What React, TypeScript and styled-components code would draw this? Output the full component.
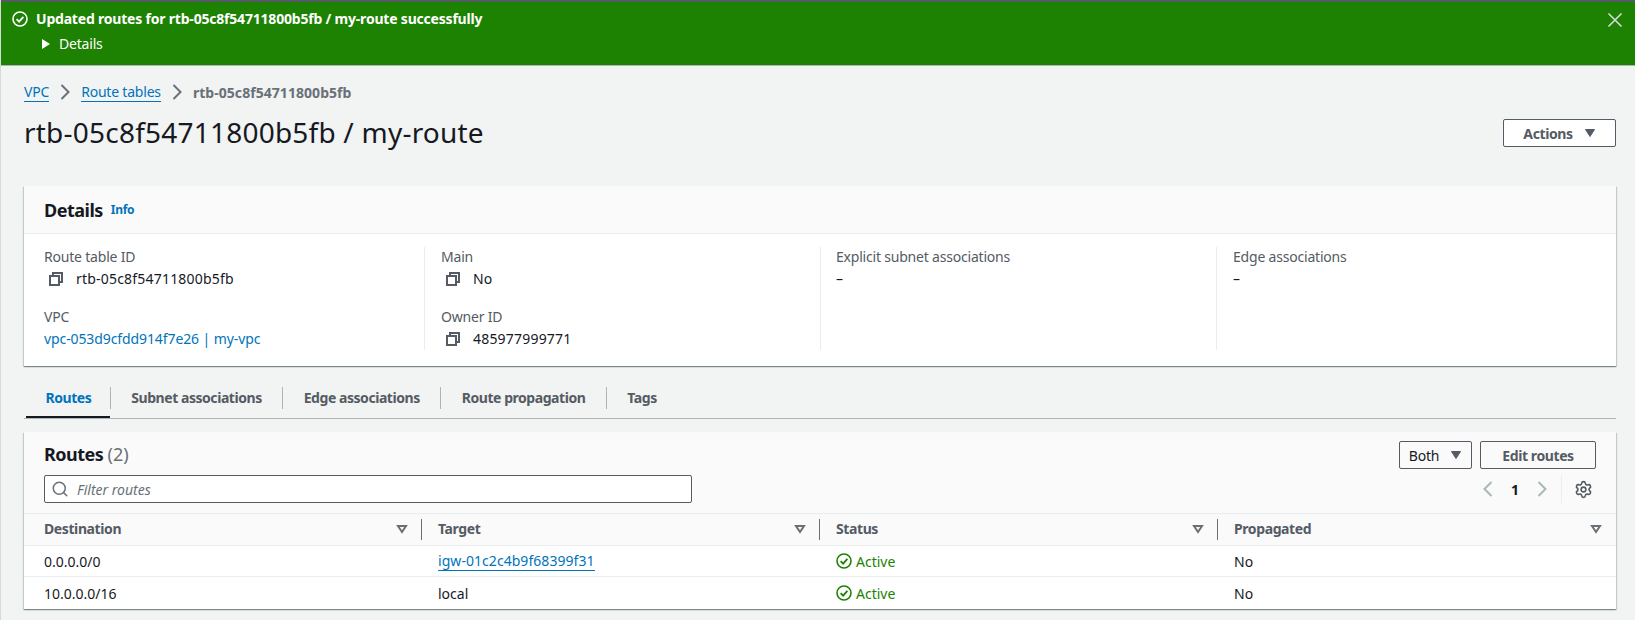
import { createGlobalStyle } from "styled-components";
import styled from "styled-components";
import { Search, Settings } from "lucide-react";

const GlobalStyle = createGlobalStyle`
  html, body {
    margin: 0;
    padding: 0;
    background: #f2f3f3;
    font-family: "Noto Sans", "Open Sans", sans-serif;
    font-size: 14px;
    color: #16191f;
  }
`;

const Page = styled.div`
  width: 1635px;
  height: 620px;
  overflow: hidden;
  box-sizing: border-box;
  border-left: 1px solid #d5dbdb;
`;

const Banner = styled.div`
  box-sizing: border-box;
  height: 66px;
  margin-left: -1px;
  background: #1d8102;
  border-top: 2px solid #545b64;
  border-bottom: 1px solid #aab7b8;
  padding: 7px 12px 0 12px;
  color: #fff;
  display: flex;
  justify-content: space-between;
  align-items: flex-start;
`;

const BannerBody = styled.div`
  display: flex;
  flex-direction: column;
  gap: 6px;
`;

const BannerTitle = styled.div`
  display: flex;
  align-items: center;
  gap: 8px;
  font-weight: 700;
  line-height: 19px;
  letter-spacing: -0.2px;
`;

const BannerDetails = styled.div`
  display: flex;
  align-items: center;
  gap: 9px;
  padding-left: 30px;
  line-height: 19px;
  letter-spacing: -0.2px;
`;

const CloseIcon = styled.svg`
  margin-top: 3px;
`;

const Main = styled.main`
  padding: 0 19px 0 23px;
`;

const Crumbs = styled.nav`
  display: flex;
  align-items: center;
  height: 20px;
  margin-top: 16px;
  gap: 10px;
`;

const Link = styled.a`
  color: #0073bb;
`;

const CrumbLink = styled(Link)`
  border-bottom: 1px solid #0073bb;
  line-height: 18px;
  letter-spacing: -0.2px;
`;

const CrumbCurrent = styled.span`
  color: #687078;
  font-weight: 700;
  letter-spacing: 0.05px;
`;

const TitleRow = styled.div`
  display: flex;
  justify-content: space-between;
  align-items: center;
  margin-top: 11px;
  height: 40px;
`;

const Title = styled.h1`
  margin: 0 0 2px;
  font-size: 28px;
  font-weight: 400;
  line-height: 38px;
  letter-spacing: 0.22px;
`;

const Button = styled.button<{ $width: number; $plain?: boolean }>`
  box-sizing: border-box;
  width: ${(p) => p.$width}px;
  height: 28px;
  background: ${(p) => (p.$plain ? "#fafafa" : "#fff")};
  border: 1px solid #545b64;
  border-radius: 2px;
  color: #545b64;
  font: 700 14px "Noto Sans", sans-serif;
  letter-spacing: -0.4px;
  display: inline-flex;
  align-items: center;
  justify-content: center;
  gap: 11px;
  padding: 0;
`;

const PlainButton = styled(Button)`
  font-weight: 400;
  color: #16191f;
  letter-spacing: -0.2px;
`;

const Card = styled.section`
  background: #fff;
  box-shadow: 0 1px 1px 0 rgba(0, 28, 36, 0.3), 1px 1px 1px 0 rgba(0, 28, 36, 0.15),
    -1px 1px 1px 0 rgba(0, 28, 36, 0.15);
`;

const DetailsCard = styled(Card)`
  margin-top: 33px;
  height: 180px;
`;

const CardHeader = styled.header`
  box-sizing: border-box;
  height: 48px;
  background: #fafafa;
  border-bottom: 1px solid #eaeded;
  display: flex;
  align-items: center;
  gap: 8px;
  padding: 0 20px;
`;

const CardTitle = styled.h2`
  margin: 0;
  font-size: 18px;
  font-weight: 700;
  line-height: 24px;
  letter-spacing: -0.5px;
`;

const InfoLink = styled(Link)`
  font-size: 12px;
  font-weight: 700;
  letter-spacing: -0.3px;
`;

const DetailsGrid = styled.div`
  display: grid;
  grid-template-columns: 401px 396px 396px 1fr;
  padding-top: 13px;
`;

const DetailsColumn = styled.div<{ $pad: number; $last?: boolean }>`
  box-sizing: border-box;
  height: 103px;
  padding: 0 16px 0 ${(p) => p.$pad}px;
  border-right: ${(p) => (p.$last ? "none" : "1px solid #eaeded")};
  display: flex;
  flex-direction: column;
  gap: 19px;
`;

const Field = styled.div`
  display: flex;
  flex-direction: column;
  gap: 3px;
`;

const Label = styled.div`
  color: #545b64;
  line-height: 19px;
  letter-spacing: -0.2px;
`;

const Value = styled.div`
  display: flex;
  align-items: center;
  gap: 12px;
  line-height: 19px;
  padding-left: 4px;
  letter-spacing: 0.2px;
`;

const Empty = styled.div`
  line-height: 19px;
`;

const ValueLink = styled(Link)`
  line-height: 19px;
  letter-spacing: -0.1px;
`;

const Tabs = styled.div`
  box-sizing: border-box;
  display: flex;
  align-items: flex-start;
  height: 32px;
  margin-top: 21px;
  border-bottom: 1px solid #aab7b8;
  padding-left: 1px;
`;

const Tab = styled.div<{ $active?: boolean; $last?: boolean }>`
  position: relative;
  box-sizing: border-box;
  height: 22px;
  padding: 0 ${(p) => (p.$active ? 18.5 : 20.5)}px 2px 20.5px;
  display: flex;
  align-items: center;
  font-weight: 700;
  letter-spacing: -0.45px;
  color: ${(p) => (p.$active ? "#0073bb" : "#545b64")};
  border-right: ${(p) => (p.$last ? "none" : "1px solid #aab7b8")};

  ${(p) =>
    p.$active &&
    `&::after {
      content: "";
      position: absolute;
      left: 1px;
      right: 0;
      bottom: -9px;
      height: 2px;
      background: #16191f;
    }`}
`;

const RoutesCard = styled(Card)`
  margin-top: 13px;
  height: 177px;
`;

const RoutesTop = styled.div`
  box-sizing: border-box;
  height: 81px;
  background: #fafafa;
  padding: 9px 20px 0;
  display: flex;
  justify-content: space-between;
`;

const RoutesLeft = styled.div`
  display: flex;
  flex-direction: column;
  gap: 9px;
  padding-top: 1px;
`;

const RoutesRight = styled.div`
  display: flex;
  flex-direction: column;
  align-items: flex-end;
  gap: 6px;
`;

const Count = styled.span`
  font-weight: 400;
  color: #687078;
  letter-spacing: 0;
`;

const FilterBox = styled.div`
  box-sizing: border-box;
  width: 648px;
  height: 28px;
  background: #fff;
  border: 1px solid #545b64;
  border-radius: 2px;
  display: flex;
  align-items: center;
  gap: 8px;
  padding-left: 6px;
  color: #687078;
  font-style: italic;
`;

const ButtonRow = styled.div`
  display: flex;
  gap: 8px;
`;

const Pager = styled.div`
  display: flex;
  align-items: center;
  height: 28px;
  padding-right: 3px;
`;

const PageNumber = styled.span`
  font-weight: 700;
  width: 42px;
  text-align: center;
`;

const PagerDivider = styled.div`
  width: 1px;
  height: 28px;
  background: #eaeded;
  margin: 0 12px 0 13px;
`;

const Row = styled.div<{ $head?: boolean; $height: number }>`
  box-sizing: border-box;
  height: ${(p) => p.$height}px;
  display: grid;
  grid-template-columns: repeat(4, 1fr);
  align-items: center;
  background: ${(p) => (p.$head ? "#fafafa" : "#fff")};
  border-top: 1px solid #eaeded;
`;

const HeadCell = styled.div<{ $first?: boolean; $last?: boolean }>`
  position: relative;
  box-sizing: border-box;
  height: 100%;
  padding: 0 14px 2px ${(p) => (p.$first ? 20 : 16)}px;
  display: flex;
  align-items: center;
  justify-content: space-between;
  font-weight: 700;
  letter-spacing: -0.4px;
  color: #545b64;

  ${(p) =>
    !p.$last &&
    `&::after {
      content: "";
      position: absolute;
      right: 0;
      top: 5px;
      bottom: 5px;
      width: 1px;
      background: #687078;
    }`}
`;

const Cell = styled.div<{ $first?: boolean }>`
  padding-left: ${(p) => (p.$first ? 20 : 16)}px;
  display: flex;
  align-items: center;
`;

const TargetLink = styled(Link)`
  border-bottom: 1px solid #0073bb;
  line-height: 18px;
  letter-spacing: 0.05px;
`;

const Active = styled.span`
  display: inline-flex;
  align-items: center;
  gap: 4px;
  color: #1d8102;
`;

const CopyIcon = () => (
  <svg width="16" height="16" viewBox="0 0 16 16" fill="none" stroke="#545b64" strokeWidth="2">
    <rect x="2" y="5" width="9" height="9" />
    <path d="M5 5V2h9v9h-3" />
  </svg>
);

const CircleCheck = ({ color, size }: { color: string; size: number }) => (
  <svg width={size} height={size} viewBox="0 0 16 16" fill="none" stroke={color} strokeWidth="1.6">
    <circle cx="8" cy="8" r="7" />
    <path d="M4.6 8.2 7.1 10.6 11.4 5.8" strokeWidth="1.8" />
  </svg>
);

const Caret = ({ color }: { color: string }) => (
  <svg width="12" height="10" viewBox="0 0 12 10">
    <path d="M1.5 1.5h9L6 8.5z" fill={color} stroke={color} />
  </svg>
);

const SortCaret = () => (
  <svg width="12" height="10" viewBox="0 0 12 10" fill="none" stroke="#687078" strokeWidth="2">
    <path d="M2 2h8L6 8z" />
  </svg>
);

const Chevron = ({ color, left }: { color: string; left?: boolean }) => (
  <svg width="12" height="16" viewBox="0 0 12 16" fill="none" stroke={color} strokeWidth="2">
    <path d={left ? "M9.5 1 2.5 8l7 7" : "M2.5 1l7 7-7 7"} />
  </svg>
);

const columns = ["Destination", "Target", "Status", "Propagated"];

const routes = [
  { destination: "0.0.0.0/0", target: "igw-01c2c4b9f68399f31", link: true },
  { destination: "10.0.0.0/16", target: "local", link: false },
];

export default function App() {
  return (
    <>
      <GlobalStyle />
      <Page>
        <Banner>
          <BannerBody>
            <BannerTitle>
              <CircleCheck color="#fff" size={16} />
              Updated routes for rtb-05c8f54711800b5fb / my-route successfully
            </BannerTitle>
            <BannerDetails>
              <svg width="8" height="10" viewBox="0 0 8 10">
                <path d="M0 0l8 5-8 5z" fill="#fff" />
              </svg>
              Details
            </BannerDetails>
          </BannerBody>
          <CloseIcon width="16" height="16" viewBox="0 0 16 16" fill="none" stroke="#d5dbdb" strokeWidth="1.6">
            <path d="M1.5 1.5l13 13M14.5 1.5l-13 13" />
          </CloseIcon>
        </Banner>
        <Main>
          <Crumbs>
            <CrumbLink>VPC</CrumbLink>
            <Chevron color="#687078" />
            <CrumbLink>Route tables</CrumbLink>
            <Chevron color="#687078" />
            <CrumbCurrent>rtb-05c8f54711800b5fb</CrumbCurrent>
          </Crumbs>
          <TitleRow>
            <Title>rtb-05c8f54711800b5fb / my-route</Title>
            <Button $width={113}>
              Actions
              <Caret color="#545b64" />
            </Button>
          </TitleRow>
          <DetailsCard>
            <CardHeader>
              <CardTitle>Details</CardTitle>
              <InfoLink>Info</InfoLink>
            </CardHeader>
            <DetailsGrid>
              <DetailsColumn $pad={20}>
                <Field>
                  <Label>Route table ID</Label>
                  <Value>
                    <CopyIcon />
                    rtb-05c8f54711800b5fb
                  </Value>
                </Field>
                <Field>
                  <Label>VPC</Label>
                  <ValueLink>vpc-053d9cfdd914f7e26 | my-vpc</ValueLink>
                </Field>
              </DetailsColumn>
              <DetailsColumn $pad={16}>
                <Field>
                  <Label>Main</Label>
                  <Value>
                    <CopyIcon />
                    No
                  </Value>
                </Field>
                <Field>
                  <Label>Owner ID</Label>
                  <Value>
                    <CopyIcon />
                    485977999771
                  </Value>
                </Field>
              </DetailsColumn>
              <DetailsColumn $pad={15}>
                <Field>
                  <Label>Explicit subnet associations</Label>
                  <Empty>–</Empty>
                </Field>
              </DetailsColumn>
              <DetailsColumn $pad={16} $last>
                <Field>
                  <Label>Edge associations</Label>
                  <Empty>–</Empty>
                </Field>
              </DetailsColumn>
            </DetailsGrid>
          </DetailsCard>
          <Tabs>
            <Tab $active>Routes</Tab>
            <Tab>Subnet associations</Tab>
            <Tab>Edge associations</Tab>
            <Tab>Route propagation</Tab>
            <Tab $last>Tags</Tab>
          </Tabs>
          <RoutesCard>
            <RoutesTop>
              <RoutesLeft>
                <CardTitle>
                  Routes <Count>(2)</Count>
                </CardTitle>
                <FilterBox>
                  <Search size={18} color="#687078" strokeWidth={2} />
                  Filter routes
                </FilterBox>
              </RoutesLeft>
              <RoutesRight>
                <ButtonRow>
                  <PlainButton $width={73} $plain>
                    Both
                    <Caret color="#545b64" />
                  </PlainButton>
                  <Button $width={116} $plain>
                    Edit routes
                  </Button>
                </ButtonRow>
                <Pager>
                  <Chevron color="#aab7b8" left />
                  <PageNumber>1</PageNumber>
                  <Chevron color="#aab7b8" />
                  <PagerDivider />
                  <Settings size={19} color="#545b64" strokeWidth={2} />
                </Pager>
              </RoutesRight>
            </RoutesTop>
            <Row $head $height={32}>
              {columns.map((name, i) => (
                <HeadCell key={name} $first={i === 0} $last={i === columns.length - 1}>
                  {name}
                  <SortCaret />
                </HeadCell>
              ))}
            </Row>
            {routes.map((route, i) => (
              <Row key={route.destination} $height={i === 0 ? 31 : 33}>
                <Cell $first>{route.destination}</Cell>
                <Cell>
                  {route.link ? <TargetLink>{route.target}</TargetLink> : route.target}
                </Cell>
                <Cell>
                  <Active>
                    <CircleCheck color="#1d8102" size={16} />
                    Active
                  </Active>
                </Cell>
                <Cell>No</Cell>
              </Row>
            ))}
          </RoutesCard>
        </Main>
      </Page>
    </>
  );
}
